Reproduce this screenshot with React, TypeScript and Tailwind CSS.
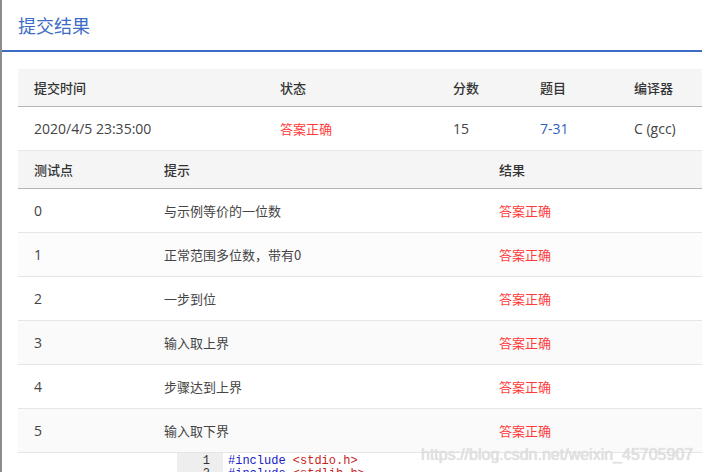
import React from "react";

const cjk = { fontFamily: '"Microsoft YaHei", "Noto Sans CJK SC", "Noto Sans", sans-serif' };
const lat = { fontFamily: '"Open Sans", "Noto Sans CJK SC", sans-serif' };

const cases = [
  { id: "0", hint: "与示例等价的一位数" },
  { id: "1", hint: "正常范围多位数，带有0" },
  { id: "2", hint: "一步到位" },
  { id: "3", hint: "输入取上界" },
  { id: "4", hint: "步骤达到上界" },
  { id: "5", hint: "输入取下界" },
];

const rowBg = ["bg-white", "bg-[#fcfcfc]", "bg-white", "bg-[#fafafa]", "bg-white", "bg-[#fafafa]"];

export default function App() {
  return (
    <div className="relative flex h-[472px] w-[702px] items-start overflow-hidden bg-white text-[13px] text-[#333]" style={cjk}>
      <div className="h-[472px] w-[2px] shrink-0 bg-[#8c8c8c]" />
      <div className="flex min-w-0 flex-1 flex-col">
        <div className="flex h-[50px] shrink-0 items-center pl-[16px] text-[18px] text-[#3d6dc6]">提交结果</div>
        <div className="h-[2px] shrink-0 bg-[#3b6cc5]" />
        <div className="ml-[16px] mt-[17px] flex shrink-0 flex-col">
          {/* summary table */}
          <div className="grid h-[37px] grid-cols-[246px_173px_87px_94px_1fr] items-center bg-[#f5f5f5] pl-[16px] font-medium text-[#333]">
            <div>提交时间</div>
            <div>状态</div>
            <div>分数</div>
            <div>题目</div>
            <div>编译器</div>
          </div>
          <div className="h-px bg-[#b5b5b5]" />
          <div className="grid h-[43px] grid-cols-[246px_173px_87px_94px_1fr] items-center pl-[16px] text-[#444]">
            <div className="text-[14px]" style={lat}>2020/4/5 23:35:00</div>
            <div className="text-[#ff3b3b]">答案正确</div>
            <div className="text-[14px]" style={lat}>15</div>
            <div className="text-[14px] text-[#2f5fbe]" style={lat}>7-31</div>
            <div className="text-[14px]" style={lat}>C (gcc)</div>
          </div>
          <div className="h-px bg-[#e6e6e6]" />
          {/* test cases table */}
          <div className="grid h-[37px] grid-cols-[130px_335px_1fr] items-center bg-[#f5f5f5] pl-[16px] font-medium text-[#333]">
            <div>测试点</div>
            <div>提示</div>
            <div>结果</div>
          </div>
          <div className="h-px bg-[#b5b5b5]" />
          {cases.map((c, i) => (
            <div key={c.id} className={`flex flex-col ${rowBg[i]}`}>
              <div className="grid h-[43px] grid-cols-[130px_335px_1fr] items-center pl-[16px] text-[#444]">
                <div className="text-[14px]" style={lat}>{c.id}</div>
                <div>{c.hint}</div>
                <div className="text-[#ff3b3b]">答案正确</div>
              </div>
              <div className="h-px bg-[#e6e6e6]" />
            </div>
          ))}
        </div>
        {/* code area */}
        <div className="ml-[175px] flex shrink-0 text-[12px] leading-[13px]" style={{ fontFamily: '"Liberation Mono", "DejaVu Sans Mono", monospace' }}>
          <div className="flex w-[46px] flex-col items-end bg-[#eeeeee] pr-[13px] pt-[2px] text-[#333]">
            <div>1</div>
            <div>2</div>
          </div>
          <div className="flex flex-col pl-[5px] pt-[2px]">
            <div>
              <span className="text-[#2020c8]">#include</span> <span className="text-[#c81e1e]">&lt;stdio.h&gt;</span>
            </div>
            <div>
              <span className="text-[#2020c8]">#include</span> <span className="text-[#c81e1e]">&lt;stdlib.h&gt;</span>
            </div>
          </div>
        </div>
      </div>
      <div
        className="absolute left-[421px] top-[446px] text-[16px] leading-[18px] text-[#e2e2e2]"
        style={{ fontFamily: '"Liberation Sans", Arial, sans-serif', textShadow: "0 0 1px #c8c8c8" }}
      >
        https://blog.csdn.net/weixin_45705907
      </div>
    </div>
  );
}
